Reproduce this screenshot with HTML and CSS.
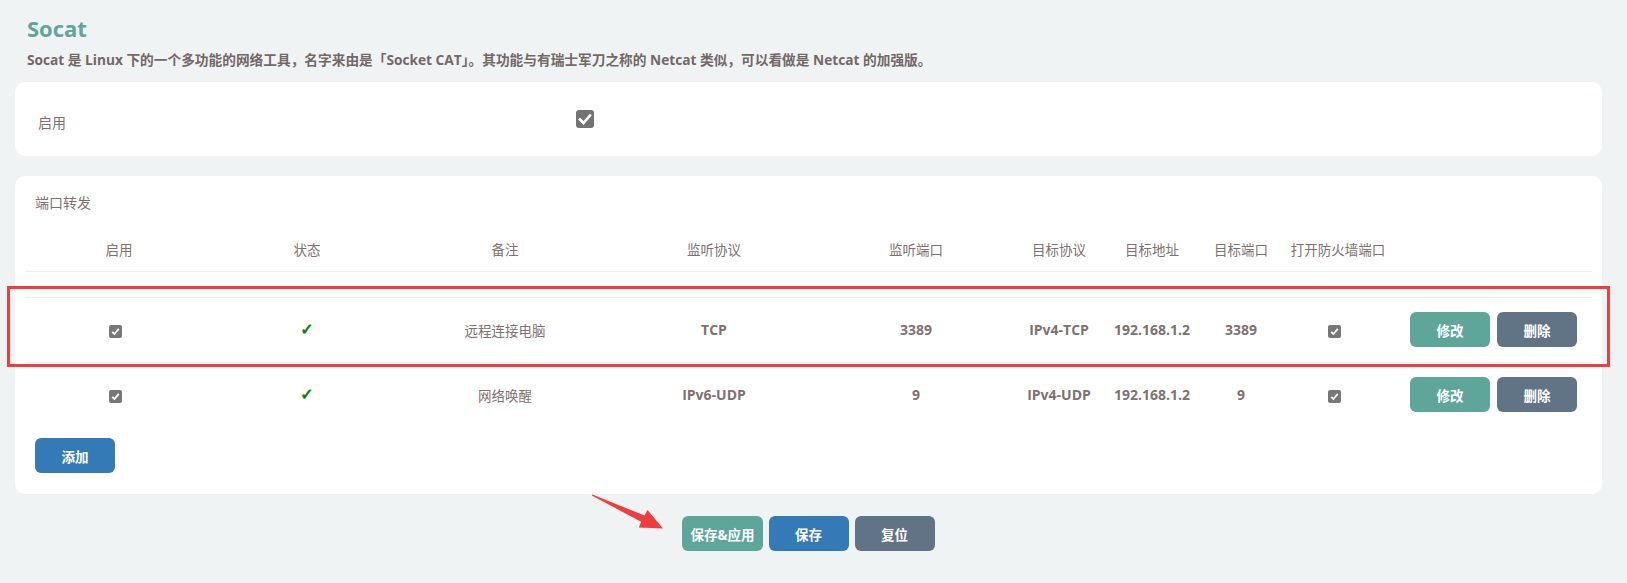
FILE: index.html
```html
<!DOCTYPE html>
<html lang="zh-CN">
<head>
<meta charset="utf-8">
<title>Socat</title>
<link rel="stylesheet" href="styles.css">
</head>
<body>
<div class="page">
  <h2 class="title">Socat</h2>
  <p class="desc">Socat 是 Linux 下的一个多功能的网络工具，名字来由是「Socket CAT」。其功能与有瑞士军刀之称的 Netcat 类似，可以看做是 Netcat 的加强版。</p>

  <div class="card card-enable">
    <label class="field-label">启用</label>
    <span class="cbox cbox-lg"><svg viewBox="0 0 18 18"><path d="M4 9.5 L7.5 13 L14 5.5" fill="none" stroke="#fff" stroke-width="2.6" stroke-linecap="square"/></svg></span>
  </div>

  <div class="card card-table">
    <div class="legend">端口转发</div>
    <table class="tbl">
      <colgroup>
        <col style="width:188px"><col style="width:188px"><col style="width:208px"><col style="width:210px"><col style="width:194px"><col style="width:92px"><col style="width:94px"><col style="width:84px"><col style="width:110px"><col>
      </colgroup>
      <thead>
        <tr class="head">
          <th>启用</th><th>状态</th><th>备注</th><th>监听协议</th><th>监听端口</th><th>目标协议</th><th>目标地址</th><th>目标端口</th><th>打开防火墙端口</th><th></th>
        </tr>
      </thead>
      <tbody>
        <tr class="spacer"><td colspan="10"></td></tr>
        <tr class="row">
          <td><span class="cbox"><svg viewBox="0 0 13 13"><path d="M3.2 6.8 L5.4 9 L9.8 3.8" fill="none" stroke="#fff" stroke-width="1.8"/></svg></span></td>
          <td><span class="ok">✓</span></td>
          <td class="remark">远程连接电脑</td>
          <td>TCP</td>
          <td>3389</td>
          <td>IPv4-TCP</td>
          <td>192.168.1.2</td>
          <td>3389</td>
          <td><span class="cbox"><svg viewBox="0 0 13 13"><path d="M3.2 6.8 L5.4 9 L9.8 3.8" fill="none" stroke="#fff" stroke-width="1.8"/></svg></span></td>
          <td class="actions"><button class="btn btn-teal">修改</button><button class="btn btn-slate">删除</button></td>
        </tr>
        <tr class="row last">
          <td><span class="cbox"><svg viewBox="0 0 13 13"><path d="M3.2 6.8 L5.4 9 L9.8 3.8" fill="none" stroke="#fff" stroke-width="1.8"/></svg></span></td>
          <td><span class="ok">✓</span></td>
          <td class="remark">网络唤醒</td>
          <td>IPv6-UDP</td>
          <td>9</td>
          <td>IPv4-UDP</td>
          <td>192.168.1.2</td>
          <td>9</td>
          <td><span class="cbox"><svg viewBox="0 0 13 13"><path d="M3.2 6.8 L5.4 9 L9.8 3.8" fill="none" stroke="#fff" stroke-width="1.8"/></svg></span></td>
          <td class="actions"><button class="btn btn-teal">修改</button><button class="btn btn-slate">删除</button></td>
        </tr>
      </tbody>
    </table>
    <div class="add-row"><button class="btn btn-blue">添加</button></div>
  </div>

  <div class="footer">
    <button class="btn btn-teal btn-wide">保存&amp;应用</button>
    <button class="btn btn-blue">保存</button>
    <button class="btn btn-slate">复位</button>
  </div>
</div>

<div class="mark-box"></div>
<svg class="mark-arrow" width="1627" height="583" viewBox="0 0 1627 583">
  <polygon points="591.8,495.6 641.2,521.8 638.8,527.4 663,528.5 647.5,510 644.6,515.6 592.3,494.4" fill="#f03c3c"/>
</svg>
</body>
</html>
```

FILE: styles.css
```css
* { box-sizing: border-box; }

html, body {
  margin: 0;
  padding: 0;
  background: #eff3f4;
}

body {
  position: relative;
  font-family: "Open Sans", "Noto Sans CJK SC", sans-serif;
  color: #807170;
  width: 1627px;
  height: 583px;
  overflow: hidden;
}

.page {
  padding: 13px 25px 0 15px;
}

.title {
  margin: 0 0 0 12px;
  font-size: 22px;
  line-height: 30px;
  font-weight: 700;
  color: #5ea69a;
}

.desc {
  margin: 7px 0 12px 12px;
  font-size: 13.7px;
  line-height: 20px;
  font-weight: 700;
  color: #746767;
}

.card {
  background: #fff;
  border-radius: 10px;
}

.card-enable {
  height: 74px;
  display: flex;
  align-items: center;
  padding: 0 23px;
  margin-bottom: 20px;
}

.field-label {
  width: 538px;
  font-size: 14px;
  margin-top: 5px;
}

.cbox {
  display: inline-flex;
  width: 13px;
  height: 13px;
  border-radius: 2px;
  background: #777;
  vertical-align: middle;
  margin-right: 8px;
}

.cbox svg { width: 100%; height: 100%; display: block; }

.cbox-lg {
  width: 18px;
  height: 18px;
  border-radius: 3px;
  background: #737373;
  margin-right: 0;
}

.card-table {
  padding: 17px 10px 21px 10px;
}

.legend {
  padding-left: 10px;
  font-size: 14px;
  line-height: 20px;
}

.tbl {
  margin-top: 14px;
  width: 100%;
  table-layout: fixed;
  border-collapse: collapse;
}

.tbl th {
  height: 44px;
  font-size: 13.5px;
  font-weight: 400;
  text-align: center;
  border-bottom: 1px solid #eeeeee;
  padding: 0;
}

.spacer td {
  height: 26px;
  padding: 0;
  border-bottom: 1px solid #eeeeee;
}

.row td {
  height: 65px;
  padding: 0;
  text-align: center;
  font-size: 14px;
  font-weight: 700;
  border-bottom: 1px solid #eeeeee;
}

.row.last td { border-bottom: none; }

.row td.remark { font-weight: 400; font-size: 13.5px; }

.ok {
  font-family: "DejaVu Sans", sans-serif;
  color: #008000;
  font-size: 16px;
  font-weight: 700;
  -webkit-text-stroke: 0.7px #008000;
}

.row td.actions {
  text-align: left;
  padding-left: 17px;
  white-space: nowrap;
}

.btn {
  height: 35px;
  min-width: 80px;
  padding: 0 10px;
  border: none;
  border-radius: 6px;
  color: #fff;
  font-family: "Open Sans", "Noto Sans CJK SC", sans-serif;
  font-size: 13.5px;
  font-weight: 700;
  cursor: pointer;
}

.btn-wide { padding: 0 8px; }

.actions .btn + .btn { margin-left: 7px; }

.btn-teal { background: #5ea69a; }
.btn-slate { background: #607486; }
.btn-blue { background: #337ab7; }

.add-row {
  margin-top: 11px;
  padding-left: 10px;
}

.footer {
  margin-top: 22px;
  display: flex;
  justify-content: center;
  gap: 6px;
}

.mark-box {
  position: absolute;
  left: 7px;
  top: 286px;
  width: 1603px;
  height: 81px;
  border: 3px solid #f03c3c;
  pointer-events: none;
}

.mark-arrow {
  position: absolute;
  left: 0;
  top: 0;
  pointer-events: none;
}
```
